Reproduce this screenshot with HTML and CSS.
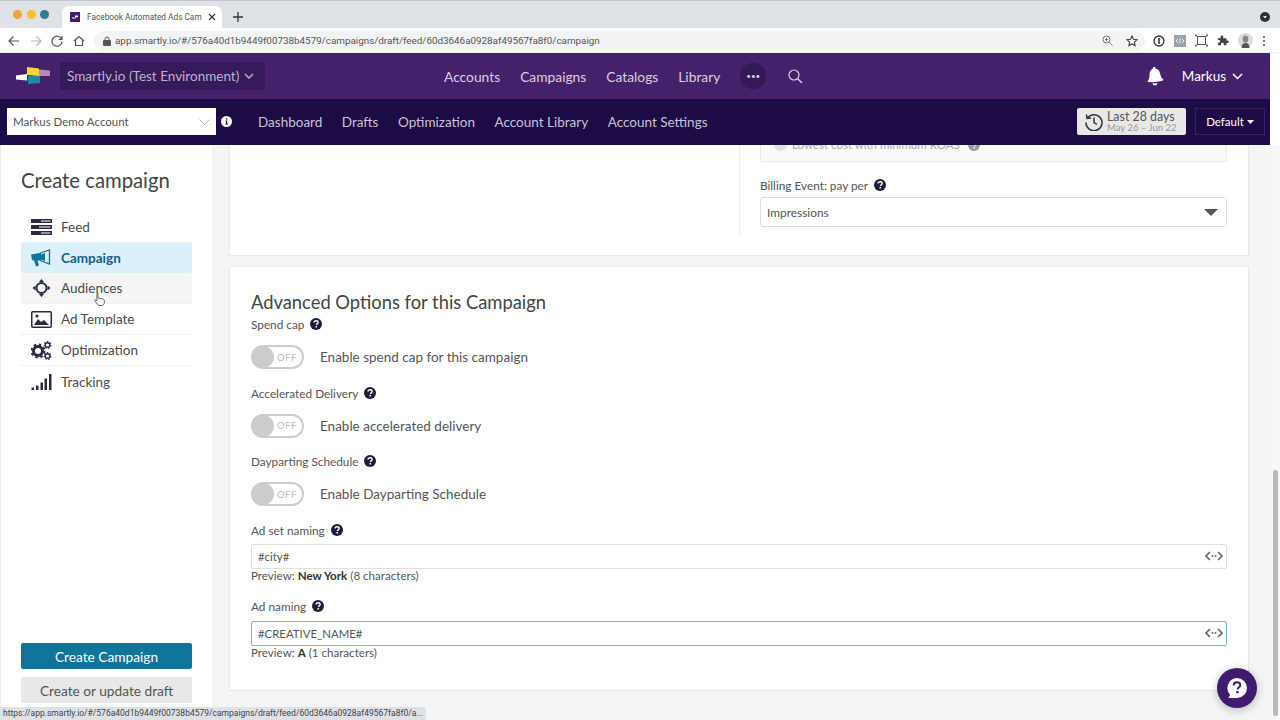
FILE: index.html
```html
<!DOCTYPE html>
<html lang="en">
<head>
  <meta charset="UTF-8" />
  <title>Facebook Automated Ads Campaign</title>
  <link rel="stylesheet" href="styles.css">
</head>
<body>

<svg class="sprite" width="0" height="0">
  <symbol id="help" viewBox="0 0 12 12">
    <circle cx="6" cy="6" r="6" fill="currentColor"/>
    <path d="M4 4.6c0-1.2 1-1.9 2.1-1.9 1.200 0 2 .7 2 1.700 0 1.500-1.600 1.400-1.600 2.500" fill="none" stroke="#fff" stroke-width="1.400"/>
    <rect x="5.500" y="8" width="1.500" height="1.500" fill="#fff"/>
  </symbol>
  <symbol id="code" viewBox="0 0 18 10">
    <path d="M5 1 1 5l4 4M13 1l4 4-4 4" fill="none" stroke="currentColor" stroke-width="1.700"/>
    <circle cx="7.500" cy="5" r="1" fill="currentColor"/>
    <circle cx="10.500" cy="5" r="1" fill="currentColor"/>
  </symbol>
</svg>

<div class="browser">
  <div class="tabbar">
    <div class="lights">
      <span class="light light-orange"></span>
      <span class="light light-yellow"></span>
      <span class="light light-teal"></span>
    </div>
    <div class="tab">
      <svg class="favicon" width="10" height="10" viewBox="0 0 10 10">
        <rect width="10" height="10" fill="#3f1a6e"/>
        <path d="M2 5.500h3V4h3v1.200H5.600v1.300H2zM5 3h3v.6H5z" fill="#fff"/>
      </svg>
      <span class="tab-title">Facebook Automated Ads Cam</span>
      <svg class="tab-close" width="8" height="8" viewBox="0 0 8 8"><path d="M1 1l6 6M7 1 1 7" stroke="#333" stroke-width="1.200"/></svg>
    </div>
    <svg class="tab-new" width="10" height="10" viewBox="0 0 10 10"><path d="M5 0v10M0 5h10" stroke="#333" stroke-width="1.300"/></svg>
    <svg class="tab-menu" width="10" height="10" viewBox="0 0 10 10">
      <circle cx="5" cy="5" r="5" fill="#2e3033"/>
      <path d="M3 4h4L5 6.500z" fill="#fff"/>
    </svg>
  </div>
  <div class="toolbar">
    <svg class="tool-icon" width="12" height="12" viewBox="0 0 12 12"><path d="M11 6H1.500M5.500 1.500 1 6l4.500 4.500" fill="none" stroke="#555" stroke-width="1.200"/></svg>
    <svg class="tool-icon" width="12" height="12" viewBox="0 0 12 12"><path d="M1 6h9.500M6.500 1.500 11 6l-4.500 4.500" fill="none" stroke="#b5b5b5" stroke-width="1.200"/></svg>
    <svg class="tool-icon" width="12" height="12" viewBox="0 0 12 12"><path d="M10.500 4A5 5 0 1 0 11 6.500M11 1v3.300H7.700" fill="none" stroke="#555" stroke-width="1.200"/></svg>
    <svg class="tool-icon" width="12" height="12" viewBox="0 0 12 12"><path d="M1 6 6 1.500 11 6M2.500 5v5.500h7V5" fill="none" stroke="#555" stroke-width="1.200"/></svg>
    <div class="urlbar">
      <svg width="8" height="10" viewBox="0 0 8 10"><rect y="4" width="8" height="6" rx="1" fill="#555"/><path d="M2 4.500V3a2 2 0 0 1 4 0v1.500" fill="none" stroke="#555"/></svg>
      <span class="url">app.smartly.io/#/576a40d1b9449f00738b4579/campaigns/draft/feed/60d3646a0928af49567fa8f0/campaign</span>
      <svg class="url-zoom" width="11" height="11" viewBox="0 0 11 11"><circle cx="4.500" cy="4.500" r="3.500" fill="none" stroke="#777"/><path d="M7 7l3.500 3.500M3 4.500h3M4.500 3v3" stroke="#777"/></svg>
      <svg class="url-star" width="12" height="12" viewBox="0 0 12 12"><path d="M6 1l1.500 3.300 3.500.4-2.600 2.400.7 3.500L6 8.900l-3.100 1.700.7-3.500L1 4.700l3.500-.4z" fill="none" stroke="#444" stroke-width="1.100"/></svg>
    </div>
    <div class="extensions">
      <svg width="12" height="12" viewBox="0 0 12 12"><circle cx="6" cy="6" r="5" fill="none" stroke="#333" stroke-width="1.300"/><rect x="5.200" y="3" width="1.600" height="6" fill="#333"/></svg>
      <svg width="12" height="12" viewBox="0 0 12 12"><rect width="12" height="12" fill="#9ba3ad"/><path d="M4 4 2 6l2 2M8 4l2 2-2 2M6.600 3.500 5.400 8.500" fill="none" stroke="#fff" stroke-width=".8"/></svg>
      <svg width="13" height="13" viewBox="0 0 13 13"><rect x="2.500" y="2.500" width="8" height="8" fill="none" stroke="#555"/><path d="M0 1.500h2M1 0v3M11 1.500h2M12 0v3M0 11.500h2M1 10v3M11 11.500h2M12 10v3" stroke="#555" stroke-width=".8"/></svg>
      <svg width="12" height="12" viewBox="0 0 12 12"><path d="M1 3.500h3V2a1.500 1.500 0 0 1 3 0v1.500h3.500V6h1a1.500 1.500 0 0 1 0 3h-1v2.500H7.500V10a1.500 1.500 0 0 0-3 0v1.500H1V8.500h1a1.500 1.500 0 0 0 0-3H1z" fill="#444" transform="scale(.9)"/></svg>
      <svg width="15" height="15" viewBox="0 0 15 15"><circle cx="7.500" cy="7.500" r="7.500" fill="#d9dcdc"/><ellipse cx="7.500" cy="6" rx="2.800" ry="3.600" fill="#8b8582"/><path d="M3.500 15c0-3.500 1.500-5 4-5s4 1.500 4 5z" fill="#555"/></svg>
      <svg width="4" height="12" viewBox="0 0 4 12"><circle cx="2" cy="2" r="1.100" fill="#555"/><circle cx="2" cy="6" r="1.100" fill="#555"/><circle cx="2" cy="10" r="1.100" fill="#555"/></svg>
    </div>
  </div>
</div>

<div class="app">
  <div class="app-frame">
    <header class="topnav">
      <svg class="logo" width="36" height="20" viewBox="0 0 36 20">
        <path d="M0 9.500 11 8v6.500L0 13.500z" fill="#fff"/>
        <path d="M11 1l12 1.500V10L11 9z" fill="#f7d732"/>
        <path d="M23 3.500l11 1V10H23z" fill="#b78bb3"/>
        <path d="M12 10h12v7l-12 1z" fill="#1f8aa6"/>
      </svg>
      <div class="org-switch">Smartly.io (Test Environment)
        <svg width="10" height="6" viewBox="0 0 10 6"><path d="M1 1l4 4 4-4" fill="none" stroke="#bdb3c9" stroke-width="1.400"/></svg>
      </div>
      <nav class="main-links">
        <a>Accounts</a>
        <a>Campaigns</a>
        <a>Catalogs</a>
        <a>Library</a>
        <span class="more-dots">•••</span>
        <svg class="search-icon" width="15" height="15" viewBox="0 0 15 15"><circle cx="6" cy="6" r="5" fill="none" stroke="#d8d0e0" stroke-width="1.200"/><path d="M9.500 9.500 14 14" stroke="#d8d0e0" stroke-width="1.400"/></svg>
      </nav>
      <div class="user-area">
        <svg width="18" height="19" viewBox="0 0 18 19"><path d="M9 0c1 0 1.400.6 1.400 1.500C13 2.300 14 4.500 14.300 7c.3 3 1.200 5 3 7-4 1.500-12.300 1.500-16.600 0C2.500 12 3.400 10 3.700 7 4 4.500 5 2.300 7.600 1.500 7.600.6 8 0 9 0z" fill="#fff" transform="rotate(-6 9 9)"/><path d="M6.500 16c1.500.6 3.500.6 5 0-.3 1.700-1.300 2.500-2.500 2.500S6.800 17.700 6.500 16z" fill="#fff"/></svg>
        <span class="user-name">Markus</span>
        <svg width="11" height="7" viewBox="0 0 11 7"><path d="M1 1l4.500 4.500L10 1" fill="none" stroke="#fff" stroke-width="1.500"/></svg>
      </div>
    </header>

    <div class="subnav">
      <div class="account-select">Markus Demo Account
        <svg width="11" height="6" viewBox="0 0 11 6"><path d="M.5.500l5 5 5-5" fill="none" stroke="#b5b5b5"/></svg>
      </div>
      <svg class="info-icon" width="11" height="11" viewBox="0 0 11 11">
        <circle cx="5.500" cy="5.500" r="5.500" fill="#fff"/>
        <path d="M4.500 4.500h1.700v3.200h.8v.9H4.200v-.9h.8V5.400h-.5zM4.800 2.200h1.400v1.400H4.800z" fill="#1c0b45"/>
      </svg>
      <nav class="sub-links">
        <a>Dashboard</a>
        <a>Drafts</a>
        <a>Optimization</a>
        <a>Account Library</a>
        <a>Account Settings</a>
      </nav>
      <div class="date-range">
        <svg width="18" height="18" viewBox="0 0 18 18"><path d="M2.500 5A8 8 0 1 1 1 9.500M1.500 1.500 2 5.500l4-.5M9 4.500V9.500l3 2" fill="none" stroke="#333" stroke-width="1.500"/></svg>
        <div class="date-text">
          <span class="date-main">Last 28 days</span>
          <span class="date-sub">May 26 – Jun 22</span>
        </div>
      </div>
      <div class="default-btn">Default
        <svg width="7" height="4" viewBox="0 0 7 4"><path d="M0 0h7L3.500 4z" fill="#fff"/></svg>
      </div>
    </div>
  </div>

  <div class="page">
    <aside class="sidebar">
      <h1 class="side-title">Create campaign</h1>
      <ul class="steps">
        <li class="step">
          <svg width="21" height="16" viewBox="0 0 21 16"><path d="M0 0h21v4H0zM0 6h21v4H0zM0 12h21v4H0z" fill="#2a2a45"/><path d="M10 1.500h9.500v1H10zM8 7.500h11.500v1H8zM10 13.500h9.500v1H10z" fill="#fff"/></svg>
          Feed
        </li>
        <li class="step step-active">
          <svg width="21" height="18" viewBox="0 0 21 18"><path d="M0 5.500 9 4v7.500H6.500L8 16.500l-3 1-2-6.200H1z" fill="#10749b"/><path d="M9.500 4 18.500 1v14l-9-3.500z" fill="none" stroke="#10749b" stroke-width="1.300"/><path d="M10 5.500 14 4v8l-4-1.500z" fill="#10749b"/></svg>
          Campaign
        </li>
        <li class="step step-hover">
          <svg width="18" height="18" viewBox="0 0 18 18"><circle cx="9" cy="9" r="5" fill="none" stroke="#2a2a45" stroke-width="2"/><path d="M9 0l2.500 3h-5zM9 18l-2.500-3h5zM0 9l3-2.500v5zM18 9l-3 2.500v-5z" fill="#2a2a45"/></svg>
          Audiences
        </li>
        <li class="step">
          <svg width="21" height="17" viewBox="0 0 21 17"><rect x=".75" y=".75" width="19.500" height="15.500" rx="1" fill="none" stroke="#2a2a45" stroke-width="1.500"/><path d="M3 14l4-6 3 3 3-2 5 5z" fill="#2a2a45"/><circle cx="6" cy="5" r="1.600" fill="#2a2a45"/></svg>
          Ad Template
        </li>
        <li class="step">
          <svg width="21" height="19" viewBox="0 0 21 19"><circle cx="7" cy="10" r="4.500" fill="none" stroke="#2a2a45" stroke-width="3"/><circle cx="7" cy="10" r="6.500" fill="none" stroke="#2a2a45" stroke-width="2" stroke-dasharray="2.500 2.600"/><circle cx="16.500" cy="4" r="2.300" fill="none" stroke="#2a2a45" stroke-width="1.500"/><circle cx="16.500" cy="4" r="3.400" fill="none" stroke="#2a2a45" stroke-width="1.200" stroke-dasharray="1.500 1.500"/><circle cx="16.500" cy="15" r="2.300" fill="none" stroke="#2a2a45" stroke-width="1.500"/><circle cx="16.500" cy="15" r="3.400" fill="none" stroke="#2a2a45" stroke-width="1.200" stroke-dasharray="1.500 1.500"/></svg>
          Optimization
        </li>
        <li class="step">
          <svg width="20" height="16" viewBox="0 0 20 16"><path d="M0 13.500h2.500V16H0zM4.500 11.500H7V16H4.500zM9 8.500h2.500V16H9zM13 4.500h2.500V16H13zM17.500 0H20v16h-2.500z" fill="#2a2a45"/></svg>
          Tracking
        </li>
      </ul>
      <div class="side-actions">
        <button class="btn-primary">Create Campaign</button>
        <button class="btn-secondary">Create or update draft</button>
      </div>
    </aside>

    <main class="content">
      <section class="panel panel-scrolled">
        <div class="col-left"></div>
        <div class="col-right">
          <div class="radio-box">
            <span class="radio"></span>
            <span class="radio-label">Lowest cost with minimum ROAS</span>
            <svg class="help-icon help-muted"><use href="#help"/></svg>
          </div>
          <label class="field-label billing-label">Billing Event: pay per <svg class="help-icon"><use href="#help"/></svg></label>
          <div class="select-box">Impressions
            <svg width="14" height="7" viewBox="0 0 14 7"><path d="M0 0h14L7 7z" fill="#555"/></svg>
          </div>
        </div>
      </section>

      <section class="panel panel-options">
        <h2 class="panel-title">Advanced Options for this Campaign</h2>

        <label class="field-label">Spend cap <svg class="help-icon"><use href="#help"/></svg></label>
        <div class="toggle-row">
          <span class="toggle"><span class="knob"></span><span class="toggle-off">OFF</span></span>
          Enable spend cap for this campaign
        </div>

        <label class="field-label">Accelerated Delivery <svg class="help-icon"><use href="#help"/></svg></label>
        <div class="toggle-row">
          <span class="toggle"><span class="knob"></span><span class="toggle-off">OFF</span></span>
          Enable accelerated delivery
        </div>

        <label class="field-label">Dayparting Schedule <svg class="help-icon"><use href="#help"/></svg></label>
        <div class="toggle-row">
          <span class="toggle"><span class="knob"></span><span class="toggle-off">OFF</span></span>
          Enable Dayparting Schedule
        </div>

        <label class="field-label naming-label">Ad set naming <svg class="help-icon"><use href="#help"/></svg></label>
        <div class="text-input">#city#
          <svg class="code-icon" width="18" height="10"><use href="#code"/></svg>
        </div>
        <p class="preview">Preview: <b>New York</b> (8 characters)</p>

        <label class="field-label naming-label naming-second">Ad naming <svg class="help-icon"><use href="#help"/></svg></label>
        <div class="text-input text-input-focus">#CREATIVE_NAME#
          <svg class="code-icon" width="18" height="10"><use href="#code"/></svg>
        </div>
        <p class="preview">Preview: <b>A</b> (1 characters)</p>
      </section>
    </main>

    <div class="scrollbar"><span class="scroll-thumb"></span></div>
  </div>
</div>

<svg class="cursor" width="12" height="14" viewBox="0 0 12 14">
  <path d="M3 1c.8 0 1 .5 1 1v4l4 .8c1.500.3 2.500 1 2.500 2.500 0 2-1 3.700-2 4.200H4.500L1 9c-.5-.8.3-1.500 1-1l.9.8V2c0-.5.300-1 1-1z" fill="#fff" stroke="#555" stroke-width=".9"/>
</svg>

<div class="status-bubble">https://app.smartly.io/#/576a40d1b9449f00738b4579/campaigns/draft/feed/60d3646a0928af49567fa8f0/a...</div>

<div class="chat-btn">
  <svg width="22" height="22" viewBox="0 0 22 22">
    <path d="M11 1a10 10 0 0 1 0 20H2.500l1.600-3.200A10 10 0 0 1 11 1z" fill="#fff"/>
    <path d="M7.800 8.500c0-2 1.500-3.200 3.300-3.200s3.200 1.100 3.200 2.800c0 2.500-2.700 2.300-2.700 4.300" fill="none" stroke="#3f1a6e" stroke-width="2"/>
    <rect x="10.300" y="14" width="2.300" height="2.300" fill="#3f1a6e"/>
  </svg>
</div>

</body>
</html>
```

FILE: styles.css
```css
* {
  box-sizing: border-box;
}

html, body {
  margin: 0;
  height: 720px;
  overflow: hidden;
}

body {
  font-family: "Lato", "Open Sans", sans-serif;
  color: #444;
  background: #fff;
  display: flex;
  flex-direction: column;
}

.sprite {
  position: absolute;
}

/* browser chrome */
.browser {
  font-family: "Roboto", "Liberation Sans", sans-serif;
  height: 53px;
  flex: none;
}

.tabbar {
  height: 28px;
  background: #dee1e6;
  border-top: 1px solid #c4c6ca;
  display: flex;
  align-items: flex-end;
}

.lights {
  display: flex;
  gap: 4.500px;
  width: 62px;
  padding: 0 0 9px 13px;
}

.light {
  width: 9px;
  height: 9px;
  border-radius: 50%;
}

.light-orange { background: #eda43a; }
.light-yellow { background: #f4c02e; }
.light-teal { background: #2f7f93; }

.tab {
  width: 160px;
  height: 22px;
  background: #fff;
  border-radius: 7px 7px 0 0;
  display: flex;
  align-items: center;
  padding: 0 6px 0 8px;
  font-size: 8.300px;
  color: #555;
}

.tab-title {
  margin-left: 7px;
  white-space: nowrap;
}

.tab-close {
  margin-left: auto;
}

.tab-new {
  margin: 0 0 6px 11px;
}

.tab-menu {
  margin: 0 10px 6px auto;
}

.toolbar {
  height: 25px;
  background: #fff;
  display: flex;
  align-items: center;
  border-bottom: 1px solid #eee;
  padding: 1px 0 0 8px;
}

.tool-icon {
  margin-right: 9.500px;
}

.urlbar {
  width: 1051px;
  height: 20px;
  background: #f1f3f4;
  border-radius: 10px;
  display: flex;
  align-items: center;
  padding: 0 7px 0 9px;
  font-size: 9.850px;
  color: #555;
}

.url {
  margin-left: 4px;
  white-space: nowrap;
}

.url-zoom {
  margin-left: auto;
}

.url-star {
  margin-left: 13px;
}

.extensions {
  flex: 1;
  display: flex;
  align-items: center;
  gap: 9px;
  padding-left: 8px;
}

/* app header */
.app {
  flex: 1;
  min-height: 0;
  display: flex;
  flex-direction: column;
}

.app-frame {
  flex: none;
  margin-right: 10px;
}

.topnav {
  height: 46px;
  background: #46216b;
  display: flex;
  align-items: center;
  padding-left: 16px;
}

.org-switch {
  margin-left: 8px;
  width: 205px;
  height: 28px;
  background: #371a5c;
  color: #bdb3c9;
  font-size: 13.500px;
  display: flex;
  align-items: center;
  gap: 5px;
  padding-left: 7px;
}

.main-links {
  margin-left: 179px;
  display: flex;
  align-items: center;
  gap: 20px;
  font-size: 13.800px;
  color: #d8d0e0;
}

.more-dots {
  width: 26px;
  height: 26px;
  border-radius: 50%;
  background: #341857;
  font-size: 8px;
  display: flex;
  align-items: center;
  justify-content: center;
}

.search-icon {
  margin-left: 2px;
}

.user-area {
  margin-left: auto;
  margin-right: 27px;
  display: flex;
  align-items: center;
  color: #fff;
  font-size: 13.500px;
}

.user-name {
  margin: 0 6px 0 18px;
}

.subnav {
  height: 46px;
  background: #1c0b45;
  display: flex;
  align-items: center;
  padding: 0 5px 1px 7px;
}

.account-select {
  width: 209px;
  height: 27px;
  background: #fff;
  font-size: 11.500px;
  color: #555;
  display: flex;
  align-items: center;
  justify-content: space-between;
  padding: 0 6px;
}

.info-icon {
  margin-left: 5px;
}

.sub-links {
  margin-left: 26px;
  display: flex;
  gap: 19.500px;
  font-size: 13.500px;
  color: #c9c3d6;
}

.date-range {
  margin-left: auto;
  width: 109px;
  height: 27px;
  background: #e8e8e8;
  border-radius: 2px;
  display: flex;
  align-items: center;
  gap: 4px;
  padding-left: 8px;
}

.date-text {
  display: flex;
  flex-direction: column;
}

.date-main {
  font-size: 12.400px;
  line-height: 12px;
  color: #555;
}

.date-sub {
  font-size: 9.500px;
  line-height: 10px;
  color: #999;
}

.default-btn {
  margin-left: 9px;
  width: 70px;
  height: 27px;
  border: 1px dotted #4a3a6e;
  color: #fff;
  font-size: 11.500px;
  display: flex;
  align-items: center;
  justify-content: center;
  gap: 3px;
}

/* page under the header */
.page {
  flex: 1;
  min-height: 0;
  display: flex;
  background: #f5f5f5;
  overflow: hidden;
}

.sidebar {
  width: 212px;
  flex: none;
  background: #fff;
  padding: 0 20px 17px 21px;
  display: flex;
  flex-direction: column;
  border-left: 1px solid #eee;
}

.side-title {
  margin: 22px 0 18px -1px;
  font-size: 20.300px;
  font-weight: 400;
  line-height: 26px;
  color: #444;
}

.steps {
  list-style: none;
  margin: 0 0 0 -1px;
  padding: 0;
}

.step {
  height: 31px;
  display: flex;
  align-items: center;
  gap: 9px;
  padding-left: 10px;
  font-size: 13.500px;
  color: #4a4a4a;
  border-bottom: 1px solid #f0f0f0;
}

.step svg {
  width: 21px;
}

.step:first-child,
.step:last-child {
  border-bottom: none;
}

.step-active {
  background: #dcf0fa;
  color: #10618a;
  font-weight: 700;
  border-radius: 2px;
  border-bottom: none;
}

.step-hover {
  background: #f5f5f5;
}

.side-actions {
  margin: auto 0 0 -1px;
  display: flex;
  flex-direction: column;
  gap: 8px;
}

.side-actions button {
  height: 26px;
  border: none;
  border-radius: 2px;
  font-family: inherit;
  font-size: 13.700px;
}

.btn-primary {
  background: #10749b;
  color: #fff;
}

.btn-secondary {
  background: #e8e8e8;
  color: #555;
}

.content {
  flex: 1;
  min-width: 0;
  padding: 0 21px 0 17px;
}

.panel {
  background: #fff;
  border: 1px solid #e8e8e8;
  border-top-color: #eee;
}

.panel-scrolled {
  margin-top: -30px;
  height: 141px;
  padding-bottom: 19px;
  display: flex;
}

.col-left {
  width: 509px;
  flex: none;
}

.col-right {
  flex: 1;
  border-left: 1px solid #eee;
  padding: 9px 21px 0 20px;
}

.radio-box {
  height: 37px;
  background: #f9f9f9;
  border: 1px solid #e8e8e8;
  border-radius: 3px;
  padding: 12px 0 0 13px;
  display: flex;
  align-items: flex-start;
  gap: 5px;
  font-size: 11.500px;
  color: #aaa;
}

.radio {
  width: 13px;
  height: 13px;
  border-radius: 50%;
  background: #e2e2e2;
}

.radio-label {
  line-height: 14px;
}

.help-icon {
  width: 12px;
  height: 12px;
  color: #1c1c3c;
  margin-left: 3px;
  vertical-align: -1px;
}

.help-muted {
  color: #999;
  margin-top: 1px;
}

.field-label {
  display: block;
  font-size: 11.800px;
  line-height: 16px;
  color: #555;
}

.billing-label {
  margin: 16px 0 3px;
}

.select-box {
  height: 30px;
  border: 1px solid #ddd;
  border-radius: 3px;
  font-size: 11.900px;
  color: #555;
  display: flex;
  align-items: center;
  justify-content: space-between;
  padding: 1px 8px 0 6px;
}

.panel-options {
  margin-top: 10px;
  height: 425px;
  padding: 0 21px;
}

.panel-title {
  margin: 23px 0 3px;
  font-size: 18.350px;
  line-height: 24px;
  font-weight: 400;
  color: #444;
}

.toggle-row {
  display: flex;
  align-items: center;
  gap: 16px;
  font-size: 13.500px;
  color: #555;
  margin: 12px 0 16.500px;
}

.toggle {
  width: 53px;
  height: 24px;
  border: 2px solid #ccc;
  border-radius: 12px;
  display: flex;
  align-items: center;
  background: #fff;
}

.knob {
  width: 22px;
  height: 22px;
  border-radius: 50%;
  background: #ccc;
  margin-left: -1px;
}

.toggle-off {
  margin-left: 3px;
  font-size: 9.500px;
  letter-spacing: .5px;
  color: #bbb;
}

.naming-label {
  margin: 0 0 5px;
}

.naming-second {
  margin-top: 16px;
  margin-bottom: 6px;
}

.text-input {
  height: 25px;
  border: 1px solid #e0e0e0;
  border-radius: 2px;
  font-size: 11.400px;
  color: #555;
  display: flex;
  align-items: center;
  justify-content: space-between;
  padding: 0 3px 0 6px;
}

.text-input-focus {
  border-color: #7fb4cf;
}

.code-icon {
  color: #666;
}

.preview {
  margin: 0;
  font-size: 11.600px;
  line-height: 14px;
  color: #555;
}

.preview b {
  color: #333;
}

.scrollbar {
  width: 10px;
  flex: none;
  background: #f8f8f8;
  border-left: 1px solid #eee;
  padding: 325px 2px 4px 2px;
}

.scroll-thumb {
  display: block;
  height: 246px;
  width: 5px;
  border-radius: 3px;
  background: #b9b9b9;
}

/* overlays */
.cursor {
  position: absolute;
  left: 94px;
  top: 292px;
}

.status-bubble {
  position: absolute;
  left: 0;
  bottom: 0;
  width: 426px;
  height: 13px;
  background: #dee1e6;
  border-radius: 0 3px 0 0;
  font-family: "Roboto", "Liberation Sans", sans-serif;
  font-size: 8.500px;
  line-height: 13px;
  color: #444;
  padding-left: 3px;
  white-space: nowrap;
  overflow: hidden;
}

.chat-btn {
  position: absolute;
  left: 1217px;
  top: 668px;
  width: 40px;
  height: 40px;
  border-radius: 50%;
  background: #3f1a6e;
  box-shadow: 0 2px 10px rgba(0,0,0,0.25);
  display: flex;
  align-items: center;
  justify-content: center;
}
```
